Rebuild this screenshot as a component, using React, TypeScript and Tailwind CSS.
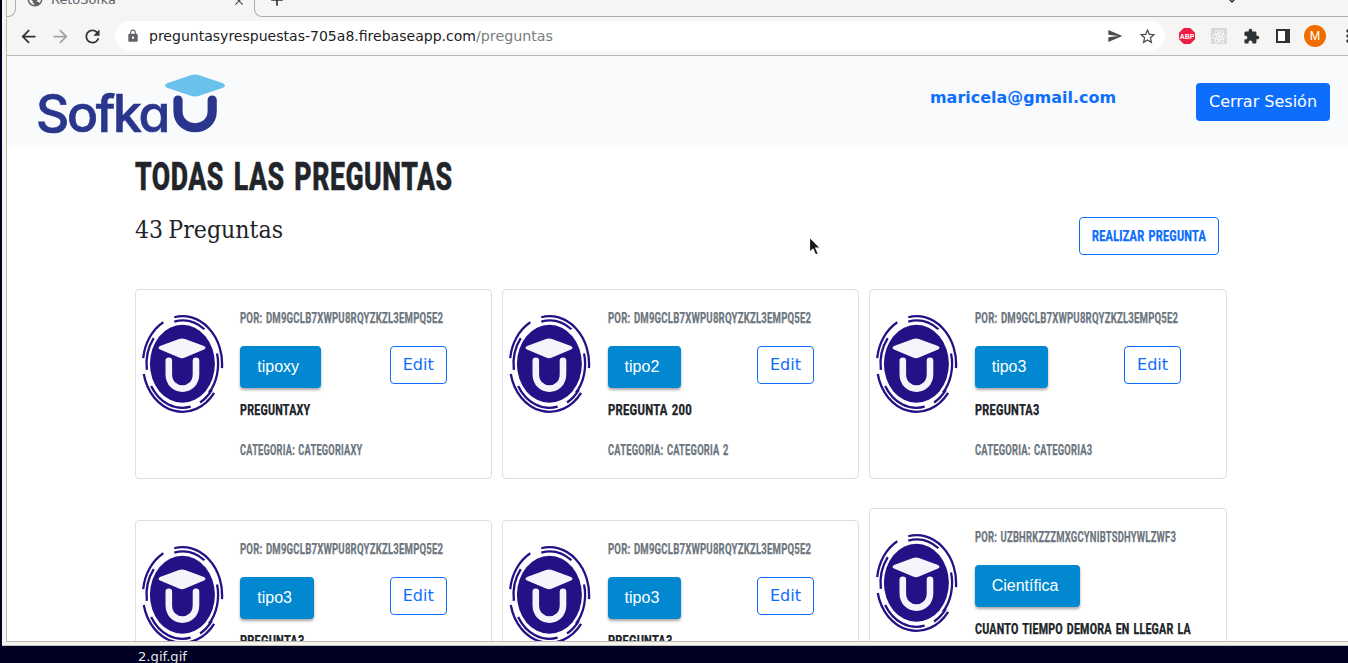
import { useLayoutEffect, useRef, useState } from "react";
import {
  MdArrowBack,
  MdArrowForward,
  MdRefresh,
  MdLock,
  MdSend,
  MdStarBorder,
  MdExtension,
  MdMoreVert,
  MdPublic,
  MdClose,
  MdAdd,
  MdExpandMore,
} from "react-icons/md";
import { FaReact } from "react-icons/fa";

/* Text condensed or widened horizontally to span an exact width. */
function FitText({ text, width, className }: { text: string; width: number; className: string }) {
  const ref = useRef<HTMLSpanElement>(null);
  const [scale, setScale] = useState(1);
  useLayoutEffect(() => {
    if (ref.current) setScale(width / ref.current.getBoundingClientRect().width);
  }, []);
  return (
    <span className="block" style={{ width }}>
      <span
        ref={ref}
        className={`block w-max origin-left whitespace-nowrap ${className}`}
        style={{ transform: `scaleX(${scale})` }}
      >
        {text}
      </span>
    </span>
  );
}

const display = "font-['Roboto',sans-serif] tracking-[0.02em] [word-spacing:0.1em]";

function Arc({ rx, ry, from, to }: { rx: number; ry: number; from: number; to: number }) {
  const point = (deg: number) => {
    const a = (deg * Math.PI) / 180;
    return `${40.5 + rx * Math.cos(a)} ${50 + ry * Math.sin(a)}`;
  };
  return (
    <path
      d={`M${point(from)}A${rx} ${ry} 0 ${to - from > 180 ? 1 : 0} 1 ${point(to)}`}
      fill="none"
      stroke="#231185"
      strokeWidth="2.3"
    />
  );
}

function Badge() {
  return (
    <svg className="block h-[99px] w-[82px]" viewBox="0 0 82 99">
      <ellipse cx="40.4" cy="49.8" rx="32.5" ry="39" fill="#231185" />
      <Arc rx={39.6} ry={47.8} from={258} to={365} />
      <Arc rx={39.6} ry={47.8} from={187} to={241} />
      <Arc rx={39.6} ry={47.8} from={37} to={168} />
      <Arc rx={36.5} ry={43.5} from={257} to={307} />
      <Arc rx={35.6} ry={43} from={-14} to={42} />
      <Arc rx={36} ry={43} from={172} to={217} />
      <Arc rx={36.2} ry={43.8} from={77} to={150} />
      <Arc rx={36.2} ry={44} from={36} to={61} />
      <path
        d="M18 32L37 24.9Q40 23.9 43 24.9L62 32Q65 33.8 62 35.5L43 43.5Q40 44.8 37 43.5L18 35.5Q15 33.8 18 32Z"
        fill="#f6f4fa"
      />
      <path
        d="M26.8 46.8V60C26.8 79.5 54 79.5 54 60V46.8"
        fill="none"
        stroke="#f6f4fa"
        strokeWidth="6.6"
        strokeLinecap="round"
      />
    </svg>
  );
}

function Logo() {
  return (
    <div className="flex items-start">
      <div className="-ml-px pt-[13px]">
        <FitText
          text="Sofka"
          width={132}
          className="font-['Inter',sans-serif] text-[51.5px] leading-[52px] font-medium tracking-[-0.045em] text-[#2a368d] [-webkit-text-stroke:0.7px_#2a368d] [font-feature-settings:'cv11']"
        />
      </div>
      <svg className="-ml-[4px] h-[60px] w-[62px] shrink-0" viewBox="0 0 62 60">
        <path
          d="M3 9.2L26 1.5Q31 -.4 36 1.5L59 9.2Q63 11.5 59 13.8L36 21.6Q31 23.6 26 21.6L3 13.8Q-1 11.5 3 9.2Z"
          fill="#69c1ec"
        />
        <path
          d="M14 26V37C14 59.3 48.2 59.3 48.2 37V26"
          fill="none"
          stroke="#2a368d"
          strokeWidth="9.2"
          strokeLinecap="round"
        />
      </svg>
    </div>
  );
}

type Question = {
  author: string;
  authorWidth: number;
  kind: string;
  title: string;
  titleWidth: number;
  category?: string;
  categoryWidth?: number;
  editable: boolean;
};

const OWNER = "POR: DM9GCLB7XWPU8RQYZKZL3EMPQ5E2";

const questions: Question[] = [
  { author: OWNER, authorWidth: 203.3, kind: "tipoxy", title: "PREGUNTAXY", titleWidth: 70.5, category: "CATEGORIA: CATEGORIAXY", categoryWidth: 122.5, editable: true },
  { author: OWNER, authorWidth: 203.3, kind: "tipo2", title: "PREGUNTA 200", titleWidth: 84, category: "CATEGORIA: CATEGORIA 2", categoryWidth: 120.5, editable: true },
  { author: OWNER, authorWidth: 203.3, kind: "tipo3", title: "PREGUNTA3", titleWidth: 64.5, category: "CATEGORIA: CATEGORIA3", categoryWidth: 117.3, editable: true },
  { author: OWNER, authorWidth: 203.3, kind: "tipo3", title: "PREGUNTA3", titleWidth: 64.5, editable: true },
  { author: OWNER, authorWidth: 203.3, kind: "tipo3", title: "PREGUNTA3", titleWidth: 64.5, editable: true },
  { author: "POR: UZBHRKZZZMXGCYNIBTSDHYWLZWF3", authorWidth: 201, kind: "Científica", title: "CUANTO TIEMPO DEMORA EN LLEGAR LA", titleWidth: 216, editable: false },
];

function Card({ q }: { q: Question }) {
  return (
    <article className="flex h-[190px] rounded border border-[#dfdfdf] bg-white pl-[6px]">
      <div className="w-[98.3px] shrink-0 pt-[24px]">
        <Badge />
      </div>
      <div className="pt-[20px]">
        <FitText text={q.author} width={q.authorWidth} className={`${display} text-[14px] leading-4 font-bold text-[#6c757d] [-webkit-text-stroke:0.25px_#6c757d]`} />
        <div className="mt-[20px] flex h-[42px] w-[206.4px] items-start justify-between">
          <button className="h-[42px] rounded bg-[#0288d1] pr-[21.6px] pl-[17px] font-['Liberation_Sans',sans-serif] text-[16px] text-white shadow-[0_2px_3px_rgba(0,0,0,0.35)]">
            {q.kind}
          </button>
          {q.editable && (
            <button className="h-[38px] w-[57px] rounded border border-[#0d6efd] font-['DejaVu_Sans',sans-serif] text-[16px] text-[#0d6efd]">
              Edit
            </button>
          )}
        </div>
        <div className="mt-[12px]">
          <FitText text={q.title} width={q.titleWidth} className={`${display} text-[15.5px] leading-5 font-extrabold text-[#212529] [-webkit-text-stroke:0.25px_#212529]`} />
        </div>
        {q.category && (
          <div className="mt-[18px]">
            <FitText text={q.category} width={q.categoryWidth ?? 120} className={`${display} text-[14px] leading-[25px] font-bold text-[#6c757d] [-webkit-text-stroke:0.25px_#6c757d]`} />
          </div>
        )}
      </div>
    </article>
  );
}

function BrowserBar() {
  return (
    <div className="h-[56px] shrink-0 border-b border-[#b9b9b7] bg-[#f6f5f3]">
      <div className="flex h-[17px] overflow-hidden">
        <div className="w-[9px] shrink-0 rounded-br-[8px] border-r border-b border-[#adadab]" />
        <div className="flex h-[17px] w-[238px] shrink-0 items-start">
          <MdPublic className="-mt-[10px] ml-[10px] size-[18px] text-[#5f6368]" />
          <div className="-mt-[8px] ml-[7px]">
            <FitText text="RetoSofka" width={65} className="font-['DejaVu_Sans',sans-serif] text-[13px] leading-[16px] text-[#5f6368]" />
          </div>
          <MdClose className="-mt-[6px] ml-[116px] size-[14px] text-[#4a4d50]" />
        </div>
        <div className="flex grow items-start justify-between rounded-bl-[8px] border-b border-l border-[#adadab]">
          <MdAdd className="-mt-[10px] ml-[12px] size-[20px] text-[#2e3436]" />
          <MdExpandMore className="-mt-[9px] mr-[113px] size-[18px] text-[#2e3436]" />
        </div>
      </div>
      <div className="flex h-[38px] items-center">
        <MdArrowBack className="ml-[11px] size-[21px] shrink-0 text-[#2e3436]" />
        <MdArrowForward className="ml-[11px] size-[21px] shrink-0 text-[#a0a3a6]" />
        <MdRefresh className="ml-[11px] size-[21px] shrink-0 text-[#2e3436]" />
        <div className="ml-[12px] flex h-[30px] w-[1050px] shrink-0 items-center rounded-full bg-white">
          <MdLock className="ml-[11px] size-[14px] text-[#5f6368]" />
          <div className="ml-[9px] flex">
            <FitText
              text="preguntasyrespuestas-705a8.firebaseapp.com"
              width={327}
              className="font-['DejaVu_Sans',sans-serif] text-[14.5px] leading-[20px] text-[#202124]"
            />
            <FitText text="/preguntas" width={77} className="font-['DejaVu_Sans',sans-serif] text-[14.5px] leading-[20px] text-[#7a7d80]" />
          </div>
          <MdSend className="ml-[554px] size-[16px] text-[#4a4d50]" />
          <MdStarBorder className="ml-[15px] size-[19px] text-[#4a4d50]" />
        </div>
        <svg className="ml-[14px] size-[16px] shrink-0" viewBox="0 0 16 16">
          <path d="M4.8 0H11.2L16 4.8V11.2L11.2 16H4.8L0 11.2V4.8Z" fill="#ed1e45" />
          <text x="8" y="10.8" textAnchor="middle" textLength="14.4" lengthAdjust="spacingAndGlyphs" className="fill-white font-['Liberation_Sans',sans-serif] text-[8px] font-bold">ABP</text>
        </svg>
        <div className="ml-[16px] flex size-[16px] shrink-0 items-center justify-center bg-[#d9d9d9]">
          <FaReact className="size-[15px] text-white" />
        </div>
        <MdExtension className="ml-[16px] size-[17px] shrink-0 text-[#2e3436]" />
        <div className="ml-[16px] h-[14px] w-[14px] shrink-0 border-2 border-r-[5px] border-[#2e3436] bg-white" />
        <div className="ml-[14px] flex size-[22px] shrink-0 items-center justify-center rounded-full bg-[#ef6c00] font-['Roboto',sans-serif] text-[12px] text-white">
          M
        </div>
        <MdMoreVert className="ml-[12px] size-[20px] shrink-0 text-[#2e3436]" />
      </div>
    </div>
  );
}

export default function App() {
  return (
    <div className="relative h-[663px] w-[1348px] overflow-hidden bg-[#000022] pl-[2px]">
      <div className="h-[646px] overflow-hidden border-b border-[#c6c3bd] bg-[#f6f4f0] pl-[4px]">
        <div className="flex h-[642px] w-[1348px] flex-col overflow-hidden border-b border-l border-[#bcb9b4] bg-white">
          <BrowserBar />
          <header className="flex h-[91px] shrink-0 items-start bg-[#f8fafc] pt-[18px] pl-[30px]">
            <Logo />
            <div className="mt-[13px] ml-[704px] pt-px font-['DejaVu_Sans',sans-serif] text-[16px] leading-5 font-bold text-[#0d6efd]">
              <FitText text="maricela@gmail.com" width={186} className="" />
            </div>
            <button className="mt-[9px] ml-[80px] h-[38px] w-[134px] rounded bg-[#0d6efd] font-['DejaVu_Sans',sans-serif] text-[16px] whitespace-nowrap text-white">
              Cerrar Sesión
            </button>
          </header>
          <main className="w-[1220px] shrink-0 pl-[128px]">
            <h1 className="pt-[6px]">
              <FitText text="TODAS LAS PREGUNTAS" width={317.5} className={`${display} text-[39.5px] leading-[48px] font-extrabold text-[#212529] [-webkit-text-stroke:0.6px_#212529]`} />
            </h1>
            <div className="flex h-[54px] items-start justify-between pr-[8px]">
              <h2 className="pt-[13px]">
                <FitText text="43 Preguntas" width={148} className="font-['DejaVu_Serif',serif] text-[23.5px] leading-[32px] [word-spacing:-2px] text-[#212529]" />
              </h2>
              <button className="mt-[16px] flex h-[38px] w-[140px] shrink-0 items-center justify-center rounded border border-[#0d6efd]">
                <FitText text="REALIZAR PREGUNTA" width={114} className={`${display} text-[15.5px] leading-5 font-extrabold text-[#0d6efd] [-webkit-text-stroke:0.25px_#0d6efd]`} />
              </button>
            </div>
            <section className="mt-[34px] grid grid-cols-[357.3px_357.1px_357.6px] gap-x-[10px]">
              {questions.slice(0, 3).map((q, i) => (
                <Card key={i} q={q} />
              ))}
            </section>
            <section className="grid grid-cols-[357.3px_357.1px_357.6px] items-end gap-x-[10px] pt-[29px]">
              {questions.slice(3).map((q, i) => (
                <div key={i} className={q.editable ? "pt-[12px]" : "self-start"}>
                  <Card q={q} />
                </div>
              ))}
            </section>
          </main>
        </div>
      </div>
      <div className="flex h-[17px] items-start overflow-hidden pl-[136px] font-['DejaVu_Sans',sans-serif] text-[12px] leading-[22px] text-[#e8e8ec]">
        <FitText text="2.gif.gif" width={49} className="" />
      </div>
      <svg className="absolute top-[235px] left-[807px] h-[22px] w-[15px]" viewBox="0 0 15 22">
        <path d="M2.5 2V17.5L6 14.2L8.6 20L11.4 18.8L8.8 13.2H13.5Z" fill="#161a1d" stroke="white" strokeWidth="1.2" />
      </svg>
    </div>
  );
}
